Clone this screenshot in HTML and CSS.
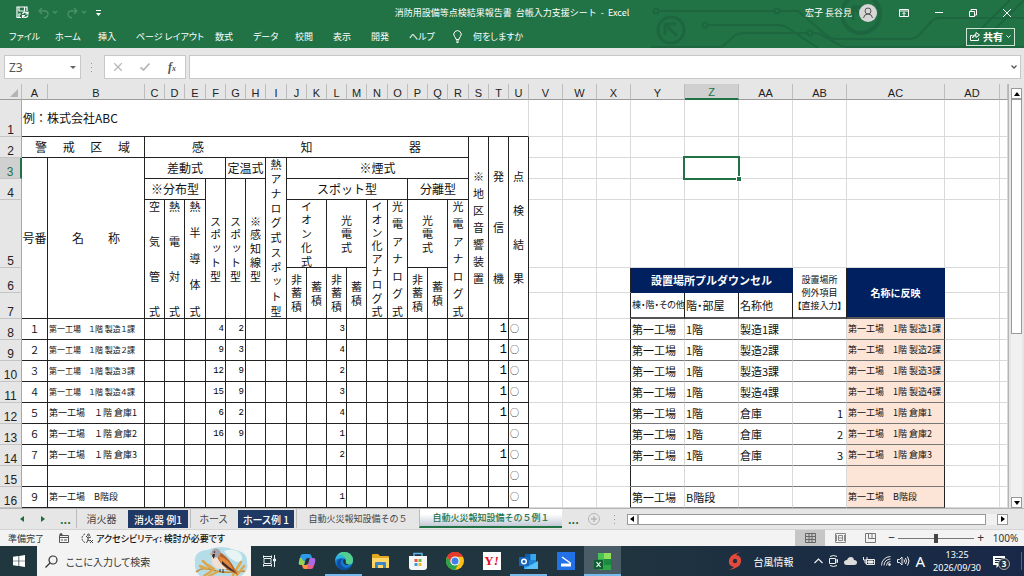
FILE: index.html
```html
<!DOCTYPE html>
<html lang="ja">
<head>
<meta charset="utf-8">
<title>消防用設備等点検結果報告書 台帳入力支援シート - Excel</title>
<link rel="stylesheet" href="styles.css">
</head>
<body>
<div class="app">
  <header class="ribbon">
    <svg class="circuit" width="384" height="48" viewBox="0 0 384 48" fill="none" stroke="#1d6640" stroke-width="2">
      <circle cx="16" cy="11" r="2.500"/><path d="M19 11H134"/><circle cx="137" cy="11" r="2.500"/><path d="M140 11H158L185 34Q190 39 197 39H270Q275 39 279 35L291 22Q294 18 300 18H384"/>
      <circle cx="31" cy="30" r="13" stroke-width="3"/><path d="M37 36L26 25M25 35V24H36" stroke-width="3"/>
      <circle cx="65" cy="25" r="2.500"/><path d="M68 25H138Q143 25 148 28L178 48"/>
      <circle cx="170" cy="33" r="2.500"/><path d="M167 33H103Q98 33 94 36L82 47H11M173 33H178L198 44Q202 47 208 47H384"/>
      <circle cx="221" cy="14" r="19" stroke-width="4"/><path d="M228 22L214 8M213 20V7H226" stroke-width="3"/>
      <path d="M322 48L370 0M336 48L384 0"/>
    </svg>
    <div class="titlebar">
      <div class="quick">
        <button class="icon-btn" aria-label="上書き保存"><svg width="13" height="13" viewBox="0 0 13 13" fill="none" stroke="#fff" stroke-width="1.200"><path d="M5 11.500H1V1H11V5M3 1V5H8.500V1M3 11V8H5"/><path d="M6.500 8A3 3 0 0 1 11.500 7M12 5.500V8H9.500M12 9.500A3 3 0 0 1 7 10.500M6.500 12V9.500H9"/></svg></button>
        <button class="icon-btn dim" aria-label="元に戻す"><svg width="20" height="12" viewBox="0 0 20 12" fill="none" stroke="currentColor" stroke-width="1.300"><path d="M4 1L1 4L4 7M1 4H7Q10 4 10 7Q10 10 6 11"/><path d="M15 4L17 6L19 4"/></svg></button>
        <button class="icon-btn dim" aria-label="やり直し"><svg width="20" height="12" viewBox="0 0 20 12" fill="none" stroke="currentColor" stroke-width="1.300"><path d="M7 1L10 4L7 7M10 4H4Q1 4 1 7Q1 10 5 11"/><path d="M15 4L17 6L19 4"/></svg></button>
        <button class="icon-btn" aria-label="クイック アクセス"><svg width="5" height="6" viewBox="0 0 5 6" fill="#fff"><path d="M0 0H5V1H0ZM0 3H5L2.500 6Z"/></svg></button>
      </div>
      <h1 class="title">消防用設備等点検結果報告書&nbsp; 台帳入力支援シート&nbsp; - &nbsp;Excel</h1>
      <div class="account">
        <span>宏子 長谷見</span>
        <svg width="18" height="18" viewBox="0 0 18 18" fill="none" stroke="#555"><circle cx="9" cy="9" r="9" fill="#d6d6d6" stroke="none"/><circle cx="9" cy="7" r="3"/><path d="M4.500 14Q5 10 9 10Q13 10 13.500 14"/></svg>
      </div>
      <div class="window-btns">
        <button class="icon-btn" aria-label="リボンの表示オプション"><svg width="10" height="8" viewBox="0 0 10 8" fill="none" stroke="#fff"><path d="M.5.5H9.500V7.500H.5ZM.5 2H9.500M5 7V3.500M3.500 5L5 3.500L6.500 5"/></svg></button>
        <button class="icon-btn" aria-label="最小化"><svg width="8" height="8" viewBox="0 0 8 8" stroke="#fff"><path d="M0 3.500H8"/></svg></button>
        <button class="icon-btn" aria-label="元のサイズに戻す"><svg width="8" height="8" viewBox="0 0 8 8" fill="none" stroke="#fff"><path d="M.5 2.500H5.500V7.500H.5ZM2 2V.5H7.500V6H6"/></svg></button>
        <button class="icon-btn" aria-label="閉じる"><svg width="8" height="8" viewBox="0 0 8 8" stroke="#fff"><path d="M0 0L8 8M8 0L0 8"/></svg></button>
      </div>
    </div>
    <nav class="menu">
      <button>ファイル</button><button>ホーム</button><button>挿入</button><button>ページ レイアウト</button><button>数式</button><button>データ</button><button>校閲</button><button>表示</button><button>開発</button><button>ヘルプ</button>
      <button class="tell"><svg width="9" height="13" viewBox="0 0 9 13" fill="none" stroke="#fff"><path d="M3 9.500Q3 8 1.500 6.500A3.700 3.700 0 1 1 7.500 6.500Q6 8 6 9.500ZM3 11H6M3.500 12.500H5.500"/></svg>何をしますか</button>
      <button class="share"><svg width="10" height="9" viewBox="0 0 10 9" fill="none" stroke="#fff"><path d="M2.500 3.500H.5V8.500H8.500V6.500M2.500 6Q3 3.500 6 3.500V5.500L9.500 3L6 .5V2.500Q3 2.500 2.500 6"/></svg>共有<svg width="5" height="3" viewBox="0 0 5 3" fill="none" stroke="#fff"><path d="M.5.5L2.500 2.500L4.500.5"/></svg></button>
    </nav>
  </header>

  <div class="formula-bar">
    <label class="name-box"><input value="Z3" aria-label="名前ボックス"><svg width="6" height="3" viewBox="0 0 6 3" fill="#666"><path d="M0 0H6L3 3Z"/></svg></label>
    <svg class="grip" width="2" height="9" viewBox="0 0 2 9" fill="#999"><path d="M0 0H1V1H0ZM0 4H1V5H0ZM0 8H1V9H0Z"/></svg>
    <div class="fx-btns">
      <button class="icon-btn" aria-label="キャンセル"><svg width="8" height="8" viewBox="0 0 8 8" stroke="#b9b9b9" stroke-width="1.300"><path d="M0 0L8 8M8 0L0 8"/></svg></button>
      <button class="icon-btn" aria-label="入力"><svg width="10" height="8" viewBox="0 0 10 8" fill="none" stroke="#b9b9b9" stroke-width="1.800"><path d="M.5 4.500L3.500 7L9.500.5"/></svg></button>
      <button class="icon-btn fx" aria-label="関数の挿入"><i>f</i><i class="sub">x</i></button>
    </div>
    <label class="formula"><input aria-label="数式バー"><svg width="6" height="4" viewBox="0 0 6 4" fill="none" stroke="#555" stroke-width="1.300"><path d="M.5.5L3 3L5.500.5"/></svg></label>
  </div>

  <main class="sheet-area">
    <div class="sheet">
      <table class="grid">
        <colgroup id="cols"></colgroup>
        <thead><tr id="letters"></tr></thead>
        <tbody id="body">
          <tr class="r1"><th>1</th><td class="k note" colspan="21">例：株式会社ABC</td></tr>
          <tr><th>2</th><td class="k wide" colspan="2"><div class="spread area">警戒区域</div></td><td class="k wide" colspan="16"><div class="spread sensor">感知器</div></td><td class="k" rowspan="6"><div class="v h113">※地区音響装置</div></td><td class="k" rowspan="6"><div class="v h113">発信機</div></td><td class="k" rowspan="6"><div class="v h113">点検結果</div></td></tr>
          <tr><th class="on">3</th><td class="k" rowspan="5">号番</td><td class="k" rowspan="5"><div class="spread name">名称</div></td><td class="k" colspan="4">差動式</td><td class="k" colspan="2">定温式</td><td class="k" rowspan="5"><div class="v h158">熱アナログ式スポット型</div></td><td class="k" colspan="9">※煙式</td></tr>
          <tr><th>4</th><td class="k" colspan="3">※分布型</td><td class="k" rowspan="4"><div class="v h66">スポット型</div></td><td class="k" rowspan="4"><div class="v h66">スポット型</div></td><td class="k" rowspan="4"><div class="v h66">※感知線型</div></td><td class="k" colspan="6">スポット型</td><td class="k" colspan="3">分離型</td></tr>
          <tr class="r5"><th>5</th><td class="k" rowspan="3"><div class="v h116">空気管式</div></td><td class="k" rowspan="3"><div class="v h116">熱電対式</div></td><td class="k" rowspan="3"><div class="v h116">熱半導体式</div></td><td class="k" colspan="2"><div class="v h66">イオン化式</div></td><td class="k" colspan="2"><div class="v h38">光電式</div></td><td class="k" rowspan="3"><div class="v h116">イオン化アナログ式</div></td><td class="k" rowspan="3"><div class="v h116">光電アナログ式</div></td><td class="k" colspan="2"><div class="v h38">光電式</div></td><td class="k" rowspan="3"><div class="v h116">光電アナログ式</div></td></tr>
          <tr class="r6"><th>6</th><td class="k" rowspan="2"><div class="v h38">非蓄積</div></td><td class="k" rowspan="2"><div class="v h25">蓄積</div></td><td class="k" rowspan="2"><div class="v h38">非蓄積</div></td><td class="k" rowspan="2"><div class="v h25">蓄積</div></td><td class="k" rowspan="2"><div class="v h38">非蓄積</div></td><td class="k" rowspan="2"><div class="v h25">蓄積</div></td><td></td><td></td><td class="edge"></td><td class="navy" colspan="3">設置場所プルダウンセル</td><td class="direct" rowspan="2">設置場所<br>例外項目<br>【直接入力】</td><td class="navy reflect" rowspan="2">名称に反映</td><td></td><td></td></tr>
          <tr class="r7"><th>7</th><td></td><td></td><td class="edge"></td><td class="sub-head tiny">棟・階・その他</td><td class="sub-head">階・部屋</td><td class="sub-head">名称他</td><td></td><td></td></tr>
        </tbody>
      </table>
    </div>
    <div class="vscroll">
      <button aria-label="上へ"><svg width="6" height="4" viewBox="0 0 6 4"><path d="M0 4H6L3 0Z"/></svg></button>
      <div class="vtrack"><div class="vthumb"></div></div>
      <button aria-label="下へ"><svg width="6" height="4" viewBox="0 0 6 4"><path d="M0 0H6L3 4Z"/></svg></button>
    </div>
  </main>

  <div class="tab-strip">
    <div class="tab-nav">
      <button aria-label="前のシート"><svg width="4" height="6" viewBox="0 0 4 6" fill="#1b6b3d"><path d="M4 0V6L0 3Z"/></svg></button>
      <button aria-label="次のシート"><svg width="4" height="6" viewBox="0 0 4 6" fill="#1b6b3d"><path d="M0 0V6L4 3Z"/></svg></button>
      <button class="more">...</button>
    </div>
    <nav class="tabs">
      <button>消火器</button><button class="dark">消火器 例1</button><button>ホース</button><button class="dark">ホース例 1</button><button class="long">自動火災報知設備その５</button><button class="active long">自動火災報知設備その５例１</button>
    </nav>
    <button class="more after">...</button>
    <button class="icon-btn" aria-label="新しいシート"><svg width="12" height="12" viewBox="0 0 12 12" fill="none" stroke="#b5b5b5"><circle cx="6" cy="6" r="5.500"/><path d="M3 6H9M6 3V9" stroke-width="1.500"/></svg></button>
    <svg class="grip" width="2" height="9" viewBox="0 0 2 9" fill="#999"><path d="M0 0H1V1H0ZM0 4H1V5H0ZM0 8H1V9H0Z"/></svg>
    <div class="hscroll">
      <button aria-label="左へ"><svg width="4" height="6" viewBox="0 0 4 6"><path d="M4 0V6L0 3Z"/></svg></button>
      <div class="htrack"><div class="hthumb"></div></div>
      <button aria-label="右へ"><svg width="4" height="6" viewBox="0 0 4 6"><path d="M0 0V6L4 3Z"/></svg></button>
    </div>
  </div>

  <footer class="status">
    <span class="ready">準備完了</span>
    <svg width="10" height="10" viewBox="0 0 10 10" fill="none" stroke="#555"><path d="M.5 2.500H9.500V9.500H.5ZM.5 4.500H9.500M2 7H4M5 7H8"/><circle cx="2" cy="1.500" r="1.500" fill="#555" stroke="none"/></svg>
    <button class="a11y"><svg width="13" height="11" viewBox="0 0 13 11" fill="none" stroke="#444"><path d="M4 1A4.500 4.500 0 0 0 4 9.500" stroke-dasharray="2 1"/><path d="M5 3L7 5L10 4M7 5V7L5.500 10M7 7L9 8M9 7L12 10M12 7L9 10"/><circle cx="7.500" cy="2" r="1"/></svg>アクセシビリティ: 検討が必要です</button>
    <div class="views">
      <button class="view current" aria-label="標準"><svg width="11" height="10" viewBox="0 0 11 10" fill="none" stroke="#666"><path d="M.5.5H10.500V9.500H.5ZM.5 3.500H10.500M.5 6.500H10.500M4 .5V9.500M7 .5V9.500"/></svg></button>
      <button class="view" aria-label="ページ レイアウト"><svg width="11" height="10" viewBox="0 0 11 10" fill="none" stroke="#888"><path d="M.5.5H10.500V9.500H.5ZM3.500 2.500H7.500V7.500H3.500ZM4 5H7M1.500 2V8M9.500 2V8"/></svg></button>
      <button class="view" aria-label="改ページ プレビュー"><svg width="11" height="10" viewBox="0 0 11 10" fill="none" stroke="#777"><path d="M.5.5H10.500V9.500H.5ZM3.500.5V5.500H10M7 .5V5.500"/></svg></button>
    </div>
    <div class="zoom">
      <span>−</span><input type="range" min="0" max="100" value="50" aria-label="ズーム"><span>+</span><span class="pct">100%</span>
    </div>
  </footer>

  <div class="taskbar">
    <button class="task start" aria-label="スタート"><svg width="12" height="12" viewBox="0 0 12 12" fill="#fff"><path d="M0 1.700L5.500 1V5.700H0ZM6.200.9L12 0V5.700H6.200ZM0 6.300H5.500V11L0 10.300ZM6.200 6.300H12V12L6.200 11.100Z"/></svg></button>
    <label class="search">
      <svg width="13" height="13" viewBox="0 0 13 13" fill="none" stroke="#333" stroke-width="1.200"><circle cx="8" cy="5" r="4"/><path d="M5 8L.5 12.500"/></svg>
      <input placeholder="ここに入力して検索" aria-label="検索">
      <svg class="bird" width="56" height="29" viewBox="0 0 56 29"><path d="M2 15Q1 4 14 3Q28-3 42 3Q55 5 54 16Q56 24 48 29H7Q1 24 2 15Z" fill="#b5dde9"/><path d="M31 4Q44 0 49 9Q50 15 44 15Q36 12 31 4Z" fill="#e6f4f3"/><path d="M3 25Q10 19 20 23Q30 27 52 24" stroke="#c98a2e" stroke-width="1.500" fill="none"/><path d="M11 29L20 23M16 29L24 25M40 28L48 15M44 28L51 19M7 19L14 22M10 14L16 20M15 18L21 22" stroke="#dba850" stroke-width="2.500" stroke-linecap="round"/><path d="M24 4Q30 6 36 13Q40 18 45 28Q37 23 29 21Q19 19 19 11Z" fill="#b5622a"/><path d="M19 10Q17 20 27 22L34 22Q26 16 24 9Z" fill="#f1e0d4"/><path d="M26 9Q36 12 40 22L32 19Q26 15 26 9Z" fill="#e3893c"/><path d="M29 14L43 26L37 23L29 17Z" fill="#3a2b29"/><circle cx="23" cy="6" r="4.500" fill="#a9a2a6"/><path d="M19 6L16 7L19 8Z" fill="#e8a33a"/><path d="M20 7L22 7L21 12L19 9Z" fill="#2c2426"/><circle cx="21.500" cy="5" r=".8" fill="#222"/><path d="M27 22V25M30 22V26" stroke="#333"/></svg>
    </label>
    <button class="task" aria-label="タスク ビュー"><svg width="13" height="12" viewBox="0 0 13 12" fill="none" stroke="#e8eef2"><path d="M.5 3V.5M8.500 3V.5M.5 9V11.500M8.500 9V11.500M.5 1.500H8.500M.5 10.500H8.500M1 3.500H8V8.500H1ZM11.500 0V12"/><path d="M10.500 4H12.500V6H10.500Z" fill="#e8eef2"/></svg></button>
    <button class="task" aria-label="Copilot"><svg width="18" height="17" viewBox="0 0 18 17"><path d="M5 1H11Q13 1 13.500 3L14 5H10Q8 5 7.500 7L6 12H3Q0 12 1 8L2.500 3Q3 1 5 1Z" fill="#2c9be8"/><path d="M2 5L1 9Q0 12 3 12H6L7 8Q4 8 4 5Z" fill="#9bd24a"/><path d="M13 16H7Q5 16 4.500 14L4 12H8Q10 12 10.500 10L12 5H15Q18 5 17 9L15.500 14Q15 16 13 16Z" fill="#e95c8e"/><path d="M12 5H15Q18 5 17 9L16 12H10Z" fill="#a76be8"/><path d="M4 12H8Q10 12 10.500 10L9 16H7Q5 16 4 12Z" fill="#f5923e"/><path d="M8 7L10.500 6L10 10L7.500 11Z" fill="#203540"/></svg></button>
    <button class="task open" aria-label="Edge"><svg width="18" height="18" viewBox="0 0 18 18"><circle cx="9" cy="9" r="9" fill="#1577cf"/><path d="M0 9Q1 0 9 0Q17 0 18 8Q18 13 12.500 12.500Q9 12 11 10Q11 6 7 6Q2 6 0 9Z" fill="#2fb5dc"/><path d="M9 0Q17 0 18 8Q18 13 12.500 12.500Q11 12 11 10Q12 6 9 4Q6 2 3 3Q5 0 9 0Z" fill="#55d08a"/><path d="M6 9Q5 15 11 16Q14 16 17 13Q14 18 9 18Q1 17 2 10Q4 6 8 7Q6 7 6 9Z" fill="#0f4f9e"/><path d="M8 9Q8 7 10 7Q11 8 10.500 10.500Q11 12.500 14 12.500Q9 14.500 8 9Z" fill="#203540"/></svg></button>
    <button class="task" aria-label="エクスプローラー"><svg width="17" height="14" viewBox="0 0 17 14"><path d="M0 1Q0 0 1 0H6L8 2H16Q17 2 17 3V14H0Z" fill="#e5a823"/><path d="M0 4H17V13Q17 14 16 14H1Q0 14 0 13Z" fill="#fcd667"/><path d="M3 14V9Q3 8 4 8H13Q14 8 14 9V14H11V11H6V14Z" fill="#3a86c8"/></svg></button>
    <button class="task" aria-label="Microsoft Store"><svg width="18" height="18" viewBox="0 0 18 18"><path d="M5 5V1.500H13V5" fill="none" stroke="#5db4e6" stroke-width="1.500"/><path d="M0 4H18V15Q18 18 15 18H3Q0 18 0 15Z" fill="#f4f6f8"/><path d="M5.500 7H8.500V10H5.500Z" fill="#e8543c"/><path d="M9.500 7H12.500V10H9.500Z" fill="#7fb53a"/><path d="M5.500 11H8.500V14H5.500Z" fill="#3a9de0"/><path d="M9.500 11H12.500V14H9.500Z" fill="#f2b82e"/></svg></button>
    <button class="task" aria-label="Chrome"><svg width="18" height="18" viewBox="0 0 18 18"><circle cx="9" cy="9" r="9" fill="#fbc116"/><path d="M9 9L1.200 4.500A9 9 0 0 1 16.800 4.500L9 4.500Z" fill="#e33b2e"/><path d="M1.200 4.500A9 9 0 0 0 9 18L12.900 11.200L9 9L5.100 11.200Z" fill="#2ba24c"/><path d="M9 4.500H16.800A9 9 0 0 0 1.200 4.500L5 11Z" fill="#e33b2e"/><circle cx="9" cy="9" r="4.600" fill="#fff"/><circle cx="9" cy="9" r="3.500" fill="#3f7fe8"/></svg></button>
    <button class="task" aria-label="Yahoo! JAPAN"><span class="yahoo">Y<i>!</i></span></button>
    <button class="task open" aria-label="Outlook"><svg width="19" height="17" viewBox="0 0 19 17"><path d="M6 1H17V13H6Z" fill="#1f86d6"/><path d="M6 1H11.500V7H6Z" fill="#0f5fae"/><path d="M11.500 1H17V7H11.500Z" fill="#35a8ee"/><path d="M5 8L12 12L19 8V16H5Z" fill="#2a9be8"/><path d="M5 16L19 8V16Z" fill="#59c1f7"/><path d="M0 4H10V13H0Z" fill="#1464b8"/><circle cx="5" cy="8.500" r="2.300" fill="none" stroke="#fff" stroke-width="1.400"/></svg></button>
    <button class="task" aria-label="スキャン"><svg width="18" height="18" viewBox="0 0 18 18"><path d="M0 0H18V18H0Z" fill="#2271e6"/><path d="M4 11.500H14V14.500H4Z" fill="#fff"/><path d="M5 5L14 11.500" stroke="#fff" stroke-width="1.500"/></svg></button>
    <button class="task open front" aria-label="Excel"><svg width="17" height="17" viewBox="0 0 17 17"><path d="M4 0H17V17H6Q4 17 4 15Z" fill="#2fa64a"/><path d="M10 0H17V6H10Z" fill="#8fe05a"/><path d="M4 0H10V6H4Z" fill="#47c256"/><path d="M10 6H17V12H10Z" fill="#1c8a3e"/><path d="M0 7H9V16H0Z" fill="#0f5f33"/><path d="M2.500 9L6.500 14M6.500 9L2.500 14" stroke="#fff" stroke-width="1.200"/></svg></button>
    <div class="tray">
      <button class="weather"><svg width="14" height="18" viewBox="0 0 14 18"><path d="M13 0Q9 1 8 3Q14 4 13 10Q12 16 1 18Q5 16 6 15Q0 14 1 8Q2 2 13 0Z" fill="#e4493b"/><circle cx="7" cy="9" r="2.200" fill="#1d3040"/></svg>台風情報</button>
      <svg width="9" height="6" viewBox="0 0 9 6" fill="none" stroke="#eee" stroke-width="1.200"><path d="M.5 5L4.500 1L8.500 5"/></svg>
      <svg width="9" height="12" viewBox="0 0 9 12" fill="none" stroke="#eee"><path d="M1 1.500Q4.500-.5 8 1.500M1 10.500Q4.500 12.500 8 10.500M.5 3.500H6.500V8.500H.5ZM6.500 5.500L8.500 4.500V7.500L6.500 6.500"/></svg>
      <svg width="13" height="8" viewBox="0 0 13 8" fill="#ddd"><path d="M3 8Q0 8 0 5.500Q0 3 3 3Q4 0 7 0Q9.500 0 10 3Q13 3 13 5.500Q13 8 10 8Z"/></svg>
      <svg width="12" height="9" viewBox="0 0 12 9" fill="none" stroke="#eee"><path d="M3.500 2.500H11.500V7.500H3.500ZM.5 0V3H4V0M2 3V6H3"/><path d="M5 4H10V6H5Z" fill="#eee"/></svg>
      <svg width="10" height="10" viewBox="0 0 10 10" fill="none" stroke="#ddd"><path d="M.5 9.500A9 9 0 0 1 9.500.5M3 9.500A6.500 6.500 0 0 1 9.500 3M5.500 9.500A4 4 0 0 1 9.500 5.500"/><circle cx="8.500" cy="8.500" r="1" fill="#ddd"/></svg>
      <svg width="13" height="10" viewBox="0 0 13 10" fill="none" stroke="#eee"><path d="M.5 3.500H2.500L5 1V9L2.500 6.500H.5ZM7 3.500Q8 5 7 6.500M8.500 2Q10.500 5 8.500 8M10.500.5Q13.500 5 10.500 9.500"/></svg>
      <span class="ime">A</span>
      <time class="clock" datetime="2026-09-30T13:25">13:25<br>2026/09/30</time>
      <button class="notice" aria-label="通知"><svg width="13" height="13" viewBox="0 0 13 13"><path d="M0 0H12V9H6L3.500 12V9H0Z" fill="#fff"/><path d="M2 2.500H10M2 4.500H10M2 6.500H7" stroke="#1b2c47"/></svg><span class="badge">3</span></button>
    </div>
  </div>
</div>
<script src="sheet.js"></script>
</body>
</html>
```
FILE: styles.css
```css
* { box-sizing: border-box; }
html, body { height: 100%; margin: 0; }
body { font-family: "Noto Sans CJK JP", "Noto Sans", sans-serif; font-size: 9px; color: #222; }
button, input { font: inherit; color: inherit; border: 0; padding: 0; margin: 0; background: none; min-width: 0; outline: 0; }
button { white-space: nowrap; font-feature-settings: "palt"; }
svg { display: block; flex: none; }
.app { display: flex; flex-direction: column; height: 100vh; overflow: hidden; background: #e6e6e6; }
.icon-btn { display: flex; align-items: center; justify-content: center; }

.ribbon { position: relative; background: #217346; color: #fff; flex: none; }
.circuit { position: absolute; right: 0; top: 0; }
.titlebar { position: relative; display: grid; grid-template-columns: 1fr auto 1fr; height: 25px; align-items: center; }
.quick { display: flex; gap: 9px; padding-left: 16px; align-items: center; }
.quick .dim { color: #4b9069; }
.title { font-size: 9px; font-weight: 400; margin: 0; white-space: nowrap; }
.account { display: flex; align-items: center; gap: 7px; justify-self: end; padding-right: 147px; grid-area: 1 / 3; white-space: nowrap; }
.window-btns { display: flex; gap: 26px; padding-right: 13px; grid-area: 1 / 3; justify-self: end; }
.menu { position: relative; display: grid; grid-template-columns: 46px 43px 38px 79px 38px 42px 38px 38px 38px 44px auto 1fr; height: 23px; padding: 0 9px; align-items: center; }
.menu button { text-align: left; }
.menu .tell { display: flex; gap: 11px; align-items: center; }
.menu .share { justify-self: end; display: flex; align-items: center; gap: 3px; height: 18px; border: 1px solid #cfe3d7; padding: 0 3px; font-size: 10px; font-weight: 700; }

.formula-bar { display: flex; align-items: center; height: 36px; padding: 2px 3px 0 4px; flex: none; }
.name-box, .fx-btns, .formula { display: flex; align-items: center; height: 24px; background: #fff; border: 1px solid #c8c8c8; }
.name-box { width: 77px; padding: 0 4px; font-size: 12px; color: #555; font-family: "Noto Sans", sans-serif; }
.name-box input { flex: 1; width: 0; }
.formula-bar .grip { margin: 0 11px 0 10px; }
.fx-btns { width: 82px; justify-content: space-around; margin-right: 3px; }
.fx { font-family: "Liberation Serif", serif; font-size: 12px; font-weight: 700; color: #555; }
.fx .sub { font-size: 8px; padding-top: 3px; }
.formula { flex: 1; padding-right: 3px; }
.formula input { flex: 1; }

.sheet-area { display: flex; flex: 1; min-height: 0; }
.sheet { flex: 1; min-width: 0; overflow: hidden; background: #fff; }
.grid { table-layout: fixed; width: 100%; border-collapse: separate; border-spacing: 0; color: #111; }
.grid th, .grid td { padding: 0; height: 21px; overflow: hidden; white-space: nowrap; border: 0 solid #d9d9d9; border-width: 0 1px 1px 0; line-height: 14px; text-align: center; }
.grid th { font-family: "Liberation Sans", sans-serif; font-weight: 400; background: #e6e6e6; color: #222; font-size: 12px; line-height: 11px; vertical-align: bottom; border-color: #c4c4c4; border-right-color: #a8a8a8; }
.grid thead th { height: 16px; font-size: 11px; border-color: #bdbdbd; border-bottom-color: #9b9b9b; }
.grid thead .on { background: #d0d0d0; color: #217346; border-bottom: 2px solid #217346; }
.grid tbody .on { background: #d0d0d0; color: #217346; border-right: 2px solid #217346; }
.corner svg { margin: 0 3px 2px auto; }
.grid .r1 > * { height: 37px; }
.grid .r5 > * { height: 68px; }
.grid .r6 > * { height: 25px; }
.grid .r7 > * { height: 26px; }
.grid .k { border-color: #222; font-size: 12px; }
.grid .note { text-align: left; padding-left: 1px; border-right-color: #d9d9d9; }
.spread { text-align-last: justify; }
.area { padding: 0 14px 0 13px; }
.sensor { padding: 0 47px; }
.name { padding: 0 24px; }
.v { writing-mode: vertical-rl; text-orientation: upright; text-align-last: justify; margin: 0 auto; font-size: 11px; line-height: 14px; }
.h158 { height: 158px; }
.h116 { height: 116px; }
.h113 { height: 113px; }
.h66 { height: 66px; }
.h38 { height: 38px; }
.h25 { height: 25px; }
.grid .edge { border-right-color: #222; }
.grid .navy { background: #002060; color: #fff; font-size: 11px; font-weight: 700; border-color: #002060; }
.grid .reflect { font-size: 10px; }
.grid .direct { font-size: 9px; line-height: 13px; border-color: #222; font-feature-settings: "palt"; }
.grid .sub-head { font-size: 11px; text-align: left; padding-left: 1px; border-color: #222; font-feature-settings: "palt"; }
.grid .sub-head.tiny { font-size: 9px; }
.grid .direct, .grid .sub-head, .grid .reflect { border-bottom: 2px solid #555; }
.grid .no { font-size: 10px; }
.grid .place { font-size: 9px; text-align: left; padding-left: 1px; }
.grid .place.small { font-size: 8px; font-feature-settings: "palt"; }
.grid .num { font: 9px "Liberation Mono", monospace; text-align: right; padding-right: 1px; color: #000; }
.grid .alarm { font-size: 12px; }
.grid .mark { font-size: 9px; text-align: left; padding-left: 1px; }
.grid .pick { font-size: 11px; text-align: left; padding-left: 1px; border-bottom-color: #777; }
.grid .right { text-align: right; padding-right: 3px; }
.grid .result { font-size: 9px; text-align: left; padding-left: 1px; background: #fce4d6; border-color: #222; border-bottom-color: #777; }
.grid .picked { position: relative; overflow: visible; }
.picked::before { content: ""; position: absolute; inset: -2px; border: 2px solid #217346; }
.picked::after { content: ""; position: absolute; right: -3px; bottom: -3px; width: 4px; height: 4px; background: #217346; outline: 1px solid #fff; }

.vscroll { width: 16px; display: flex; flex-direction: column; align-items: center; padding-top: 4px; flex: none; border-left: 1px solid #b5b5b5; }
.vscroll button, .hscroll button { display: flex; align-items: center; justify-content: center; width: 11px; height: 11px; background: #fff; border: 1px solid #999; flex: none; }
.vtrack { flex: 1; width: 11px; background: #f1f1f1; }
.vthumb { height: 59%; background: #fff; border: 1px solid #999; }

.tab-strip { display: flex; align-items: center; height: 21px; flex: none; border-top: 1px solid #b5b5b5; color: #444; padding-right: 16px; }
.tab-nav { display: flex; width: 76px; padding-left: 20px; gap: 17px; align-items: center; }
.tab-nav .more { margin-left: -2px; }
.more { color: #1b6b3d; font-size: 11px; font-weight: 700; }
.tabs { display: grid; grid-template-columns: 50px 64px 46px 60px 123px 143px; height: 100%; font-size: 10px; }
.tabs button { border-left: 1px solid #bbb; margin-bottom: 1px; }
.tabs .dark { background: #1f3864; color: #fff; font-weight: 500; border: 2px solid #e6e6e6; border-width: 1px 2px; margin-bottom: 0; }
.tabs .active { background: linear-gradient(#fff 30%, #c4cad8); color: #217346; font-weight: 500; border-bottom: 2px solid #217346; }
.tabs .long { font-size: 9px; font-feature-settings: normal; }
.after { margin: 0 9px 0 6px; }
.tab-strip .grip { margin: 0 11px 0 14px; }
.hscroll { display: flex; flex: 1; align-items: center; }
.htrack { flex: 1; height: 11px; background: #f1f1f1; }
.hthumb { width: 97%; height: 100%; background: #fff; border: 1px solid #999; }

.status { display: flex; align-items: center; height: 17px; background: #f3f3f3; color: #333; flex: none; padding-left: 8px; border-top: 1px solid #d4d4d4; }
.ready { margin-right: 15px; }
.a11y { display: flex; align-items: center; gap: 2px; margin-left: 12px; font-weight: 500; color: #111; }
.views { display: flex; margin-left: auto; align-self: stretch; }
.view { display: flex; align-items: center; justify-content: center; width: 30px; }
.view.current { background: #c6c6c6; }
.zoom { display: flex; align-items: center; gap: 3px; padding-left: 3px; font-family: "Noto Sans", sans-serif; font-size: 12px; line-height: 14px; }
.pct { width: 37px; font-size: 10px; text-align: center; }
.zoom input { appearance: none; width: 76px; height: 10px; background: linear-gradient(#777, #777) center / 100% 1px no-repeat; }
.zoom input::-webkit-slider-thumb { appearance: none; width: 4px; height: 9px; background: #444; }

.taskbar { display: flex; height: 30px; flex: none; background: linear-gradient(90deg, #20373f 0%, #20353f 60%, #1b2e42 75%, #192848 100%); color: #fff; }
.task { width: 37px; display: flex; align-items: center; justify-content: center; flex: none; border-bottom: 2px solid transparent; border-top: 2px solid transparent; }
.task.open { border-bottom-color: #76b9ed; }
.task.front { background: #4a5c66; }
.search { display: flex; align-items: center; gap: 8px; width: 214px; background: #f3f3f3; color: #444; padding: 0 2px 0 8px; font-size: 10px; flex: none; }
.search input { flex: 1; width: 0; font-feature-settings: "palt"; }
.search input::placeholder { color: #333; opacity: 1; }
.bird { align-self: end; }
.yahoo { display: block; width: 18px; height: 18px; background: #fff; color: #e0102c; font: 700 13px/17px "Liberation Serif", serif; }
.tray { display: flex; margin-left: auto; align-items: center; gap: 6px; padding-right: 2px; }
.weather { display: flex; align-items: center; gap: 12px; font-size: 10px; margin-right: 14px; }
.ime { font: 15px "Noto Sans", sans-serif; }
.clock { font: 9px/13px "Noto Sans", sans-serif; text-align: center; margin: 0 6px 0 2px; }
.notice { position: relative; width: 29px; height: 18px; border-right: 1px solid #56647a; }
.notice svg { margin-top: 2px; }
.badge { position: absolute; left: 5px; top: 6px; width: 12px; height: 12px; border-radius: 50%; border: 1px solid #aaa; background: #26303c; font: 700 8px/10px "Noto Sans", sans-serif; text-align: center; }
```
FILE: sheet.js
```js
const widths = [22, 26, 97, 20, 20, 21, 20, 20, 20, 21, 20, 20, 20, 20, 21, 20, 20, 20, 21, 20, 20, 20, 34, 34, 34, 54, 54, 54, 54, 98, 55];
const letters = "A B C D E F G H I J K L M N O P Q R S T U V W X Y Z AA AB AC AD".split(" ");

document.getElementById("cols").innerHTML =
  widths.map(w => `<col style="width:${w}px">`).join("") + "<col>";

document.getElementById("letters").innerHTML =
  '<th class="corner"><svg width="8" height="8" viewBox="0 0 8 8"><path d="M8 0V8H0Z" fill="#b4b4b4"/></svg></th>' +
  letters.map(l => `<th${l === "Z" ? ' class="on"' : ""}>${l}</th>`).join("") + "<th></th>";

const body = document.getElementById("body");

/* Free cells V to AE beside the form heading */
[...body.rows].slice(0, 5).forEach((row, r) => {
  for (let c = 0; c < 10; c++) {
    const cell = row.insertCell();
    if (r === 2 && c === 4) cell.className = "picked";
  }
});

/* no, small text, name, F, G, L, T, building, floor, room, direct entry */
const records = [
  ["１", 1, "第一工場　１階 製造１課", 4, 2, 3, 1, "第一工場", "1階", "製造1課", "", "第一工場　1階 製造1課"],
  ["２", 1, "第一工場　１階 製造２課", 9, 3, 4, 1, "第一工場", "1階", "製造2課", "", "第一工場　1階 製造2課"],
  ["３", 1, "第一工場　１階 製造３課", 12, 9, 2, 1, "第一工場", "1階", "製造3課", "", "第一工場　1階 製造3課"],
  ["４", 1, "第一工場　１階 製造４課", 15, 9, 3, 1, "第一工場", "1階", "製造4課", "", "第一工場　1階 製造4課"],
  ["５", 0, "第一工場　１階 倉庫1", 6, 2, 4, 1, "第一工場", "1階", "倉庫", 1, "第一工場　1階 倉庫1"],
  ["６", 0, "第一工場　１階 倉庫2", 16, 9, 1, "", "第一工場", "1階", "倉庫", 2, "第一工場　1階 倉庫2"],
  ["７", 0, "第一工場　１階 倉庫3", "", "", 2, 1, "第一工場", "1階", "倉庫", 3, "第一工場　1階 倉庫3"],
  ["", 0, "", "", "", "", "", "", "", "", "", ""],
  ["９", 0, "第一工場　B階段", "", "", 1, "", "第一工場", "B階段", "", "", "第一工場　B階段"]
];
const td = (cls, text = "") => `<td class="${cls}">${text}</td>`;
const blanks = n => td("k").repeat(n);

body.insertAdjacentHTML("beforeend", records.map((d, i) =>
  `<tr><th>${i + 8}</th>` +
  td("k no", d[0]) + td("k place" + (d[1] ? " small" : ""), d[2]) + blanks(3) +
  td("k num", d[3]) + td("k num", d[4]) + blanks(4) + td("k num", d[5]) + blanks(7) +
  td("k num alarm", d[6]) + td("k mark", "○") + "<td></td><td></td>" + td("edge") +
  td("pick", d[7]) + td("pick", d[8]) + td("pick", d[9]) + td("pick right", d[10]) +
  td("result", d[11]) + "<td></td><td></td></tr>").join(""));
```
